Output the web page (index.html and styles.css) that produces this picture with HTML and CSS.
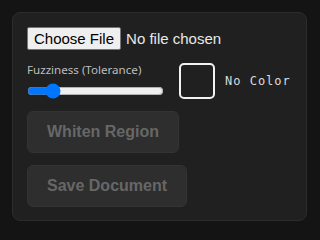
FILE: index.html
```html
<!DOCTYPE html>
<html>
<head>
<meta charset="utf-8">
<link rel="stylesheet" href="styles.css">
</head>
<body>
<div class="panel">
  <input class="file" type="file">
  <div class="row">
    <div class="fuzz">
      <label class="fuzz-label">Fuzziness (Tolerance)</label>
      <input class="slider" type="range" min="0" max="100" value="15">
    </div>
    <div class="swatch"></div>
    <span class="swatch-text">No Color</span>
  </div>
  <button class="btn" disabled>Whiten Region</button>
  <button class="btn" disabled>Save Document</button>
</div>
</body>
</html>
```
FILE: styles.css
```css
html, body {
  margin: 0;
  background: #141414;
  width: 320px;
  height: 240px;
  overflow: hidden;
}
body {
  padding: 12px;
  box-sizing: border-box;
  font-family: "Liberation Sans", Arial, sans-serif;
  color-scheme: dark;
}
.panel {
  width: 295px;
  box-sizing: border-box;
  background: #202020;
  border: 1px solid #2c2c2c;
  border-radius: 8px;
  padding: 14px 14px 13px;
  display: flex;
  flex-direction: column;
  align-items: flex-start;
  gap: 12px;
}
.file {
  font-family: "Liberation Sans", Arial, sans-serif;
  font-size: 15px;
  line-height: 19px;
  color: #e8e8e8;
  color-scheme: light;
}
.file::file-selector-button {
  font: inherit;
  background: #efefef;
  color: #000;
  border: 1px solid #767676;
  border-radius: 2px;
  padding: 1px 6px;
  margin-right: 5px;
}
.row {
  display: flex;
  align-items: center;
}
.fuzz {
  display: flex;
  flex-direction: column;
  width: 138px;
}
.fuzz-label {
  font-family: "Noto Sans", sans-serif;
  font-size: 11.6px;
  color: #bdbdbd;
  line-height: 15px;
}
.slider {
  width: 137px;
  margin: 6px 0 0 0;
  accent-color: #0075ff;
  color-scheme: light;
}
.swatch {
  width: 36px;
  height: 36px;
  box-sizing: border-box;
  border: 2px solid #f2f2f2;
  border-radius: 5px;
  margin-left: 14px;
}
.swatch-text {
  font-family: "DejaVu Sans Mono", monospace;
  font-size: 12px;
  letter-spacing: 1px;
  color: #dcdcdc;
  margin-left: 10px;
}
.btn {
  font-family: "Liberation Sans", Arial, sans-serif;
  font-weight: bold;
  font-size: 16px;
  line-height: 18px;
  color: #676767;
  background: #2e2e2e;
  border: 1px solid #333;
  border-radius: 6px;
  padding: 11px 19px;
}
```
